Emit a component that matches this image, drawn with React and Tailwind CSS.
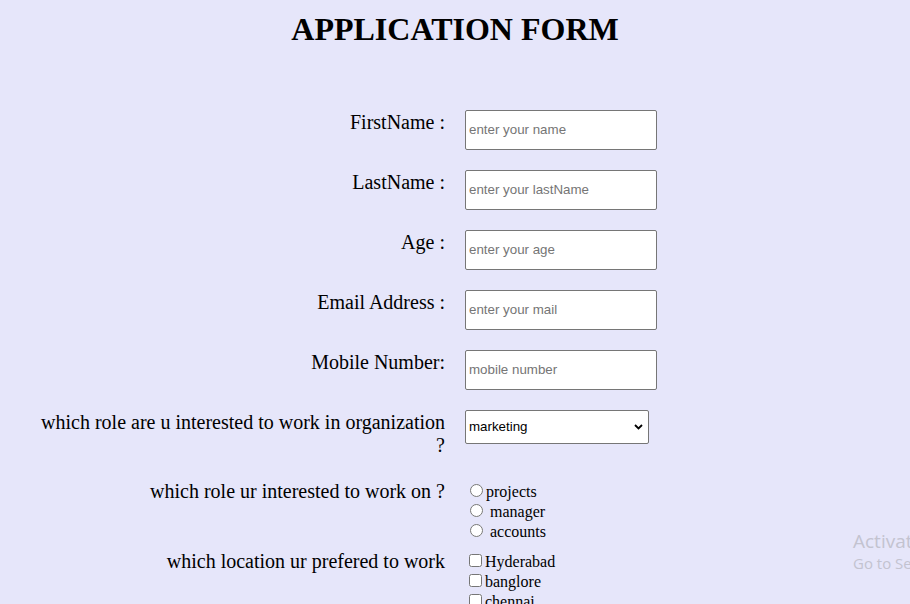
import React from "react";

const serif = { fontFamily: '"Liberation Serif", "Times New Roman", serif' };

function TextRow({ label, placeholder, className = "" }) {
  return (
    <div className={`flex items-start ${className}`}>
      <div className="w-[406px] shrink-0 pt-[1px] text-right text-[20px] leading-[23px] text-black">{label}</div>
      <div className="ml-[20px]">
        <input
          type="text"
          placeholder={placeholder}
          className="block w-[192px] h-[40px] border border-[#767676] rounded-[2px] bg-white px-[3px] pb-[1px] text-[13.33px] text-black placeholder:text-[#757575]"
          style={{ fontFamily: '"Liberation Sans", Arial, sans-serif' }}
        />
      </div>
    </div>
  );
}

export default function App() {
  return (
    <div
      className="relative w-full h-[604px] overflow-hidden bg-[#e6e6fa] text-black"
      style={serif}
    >
      <h1 className="pt-[11px] text-center text-[32px] leading-[37px] font-bold">APPLICATION FORM</h1>

      <div className="mt-[62px] pl-[39px]">
        <TextRow label="FirstName :" placeholder="enter your name" />
        <TextRow className="mt-[20px]" label="LastName :" placeholder="enter your lastName" />
        <TextRow className="mt-[20px]" label="Age :" placeholder="enter your age" />
        <TextRow className="mt-[20px]" label="Email Address :" placeholder="enter your mail" />
        <TextRow className="mt-[20px]" label="Mobile Number:" placeholder="mobile number" />

        <div className="mt-[20px] flex items-start">
          <div className="w-[406px] shrink-0 pt-[1px] text-right text-[20px] leading-[23px]">
            which role are u interested to work in organization ?
          </div>
          <div className="ml-[20px] relative">
            <select
              defaultValue="marketing"
              className="block w-[184px] h-[34px] appearance-none border border-[#767676] rounded-[2px] bg-white pl-[3px] text-[13.33px] text-black"
              style={{ fontFamily: '"Liberation Sans", Arial, sans-serif' }}
            >
              <option value="marketing">marketing</option>
              <option value="sales">sales</option>
              <option value="hr">hr</option>
            </select>
            <svg
              className="absolute right-[6px] top-[14px] pointer-events-none"
              width="9"
              height="6"
              viewBox="0 0 9 6"
            >
              <polyline points="1,1 4.5,4.5 8,1" fill="none" stroke="#000" strokeWidth="1.8" />
            </svg>
          </div>
        </div>

        <div className="mt-[22px] flex items-start">
          <div className="w-[406px] shrink-0 pt-[1px] text-right text-[20px] leading-[23px]">
            which role ur interested to work on ?
          </div>
          <div className="ml-[20px] pt-[3px] text-[16px] leading-[20px]">
            <div className="h-[20px]">
              <input type="radio" name="role" className="ml-[5px] mr-[3px] w-[13px] h-[13px] align-baseline" />projects
            </div>
            <div className="h-[20px]">
              <input type="radio" name="role" className="ml-[5px] mr-[3px] w-[13px] h-[13px] align-baseline" /> manager
            </div>
            <div className="h-[20px]">
              <input type="radio" name="role" className="ml-[5px] mr-[3px] w-[13px] h-[13px] align-baseline" /> accounts
            </div>
          </div>
        </div>

        <div className="mt-[7px] flex items-start">
          <div className="w-[406px] shrink-0 pt-[1px] text-right text-[20px] leading-[23px]">
            which location ur prefered to work
          </div>
          <div className="ml-[20px] pt-[3px] text-[16px] leading-[20px]">
            <div className="h-[20px]">
              <input type="checkbox" className="ml-[4px] mr-[3px] w-[13px] h-[13px] align-baseline" />Hyderabad
            </div>
            <div className="h-[20px]">
              <input type="checkbox" className="ml-[4px] mr-[3px] w-[13px] h-[13px] align-baseline" />banglore
            </div>
            <div className="h-[20px]">
              <input type="checkbox" className="ml-[4px] mr-[3px] w-[13px] h-[13px] align-baseline" />chennai
            </div>
          </div>
        </div>
      </div>

      <div
        className="absolute left-[853px] top-[528px] whitespace-nowrap text-[#c3c3d0]"
        style={{ fontFamily: '"Open Sans", "Noto Sans", sans-serif' }}
      >
        <div className="text-[19px] leading-[26px]">Activate Windows</div>
        <div className="text-[15px] leading-[18px]">Go to Settings to activate Windows.</div>
      </div>
    </div>
  );
}
